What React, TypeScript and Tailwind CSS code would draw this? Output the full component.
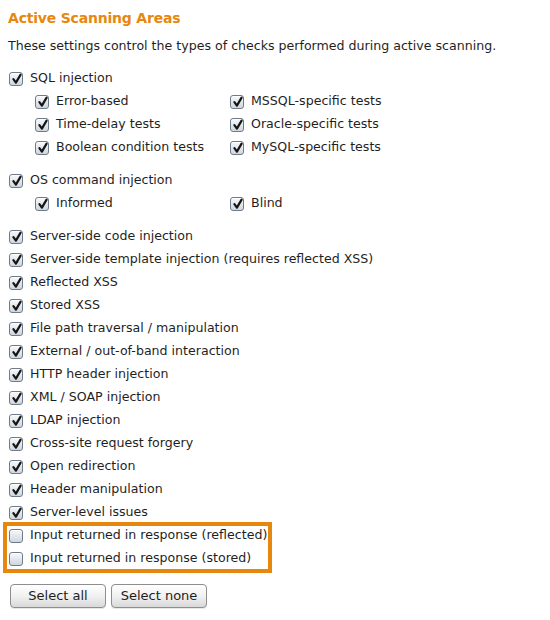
import React from "react";

type Item = { label: string; checked?: boolean };

const sqlLeft: Item[] = [
  { label: "Error-based" },
  { label: "Time-delay tests" },
  { label: "Boolean condition tests" },
];
const sqlRight: Item[] = [
  { label: "MSSQL-specific tests" },
  { label: "Oracle-specific tests" },
  { label: "MySQL-specific tests" },
];

const mainItems = [
  "Server-side code injection",
  "Server-side template injection (requires reflected XSS)",
  "Reflected XSS",
  "Stored XSS",
  "File path traversal / manipulation",
  "External / out-of-band interaction",
  "HTTP header injection",
  "XML / SOAP injection",
  "LDAP injection",
  "Cross-site request forgery",
  "Open redirection",
  "Header manipulation",
  "Server-level issues",
];

function Box({ checked = true }: { checked?: boolean }) {
  return (
    <span className="relative inline-flex h-[14px] w-[14px] shrink-0 items-center justify-center rounded-[3px] border border-[#6f7b88] bg-gradient-to-b from-[#f7f9fb] to-[#cfd6de] shadow-[inset_0_1px_0_#fff]">
      {checked && (
        <svg width="12" height="12" viewBox="0 0 12 12" className="absolute left-[1px] top-[0px]">
          <path d="M2.4 6.2 L4.9 9.6 L9.6 1.6" fill="none" stroke="#151515" strokeWidth="2.2" strokeLinecap="round" strokeLinejoin="round" />
        </svg>
      )}
    </span>
  );
}

function Row({ label, checked = true }: { label: string; checked?: boolean }) {
  return (
    <div className="flex h-[23px] items-center gap-[7px]">
      <Box checked={checked} />
      <span className="whitespace-nowrap">{label}</span>
    </div>
  );
}

function Btn({ children }: { children: React.ReactNode }) {
  return (
    <button className="h-[24px] w-[96px] rounded-[4px] border border-[#8e8e8e] bg-gradient-to-b from-[#ffffff] via-[#f1f1f1] to-[#d9d9d9] text-[13px] text-[#1e1e1e] shadow-[0_1px_0_#e8e8e8]">
      {children}
    </button>
  );
}

export default function App() {
  return (
    <div
      className="h-[620px] w-[550px] bg-white pl-[9px] pt-[8px] text-[12.6px] text-[#1f1f1f]"
      style={{ fontFamily: '"DejaVu Sans", "Liberation Sans", sans-serif' }}
    >
      <div className="-ml-[1px] h-[20px] text-[14px] font-bold leading-[20px] tracking-[-0.2px] text-[#e8870e]">
        Active Scanning Areas
      </div>
      <div className="-ml-[1px] mt-[8px] h-[20px] leading-[20px]">
        These settings control the types of checks performed during active scanning.
      </div>

      <div className="mt-[11px] flex flex-col">
        <Row label="SQL injection" />
        <div className="grid grid-cols-[195px_195px] pl-[26px]">
          <div className="flex flex-col">
            {sqlLeft.map((i) => (
              <Row key={i.label} label={i.label} />
            ))}
          </div>
          <div className="flex flex-col">
            {sqlRight.map((i) => (
              <Row key={i.label} label={i.label} />
            ))}
          </div>
        </div>

        <div className="mt-[10px]">
          <Row label="OS command injection" />
          <div className="grid grid-cols-[195px_195px] pl-[26px]">
            <Row label="Informed" />
            <Row label="Blind" />
          </div>
        </div>

        <div className="mt-[10px] flex flex-col">
          {mainItems.map((m) => (
            <Row key={m} label={m} />
          ))}
          <div className="relative">
            <div className="pointer-events-none absolute left-[-6px] top-[-2px] h-[51px] w-[269px] border-[4px] border-[#e8870e]" />
            <Row label="Input returned in response (reflected)" checked={false} />
            <Row label="Input returned in response (stored)" checked={false} />
          </div>
        </div>
      </div>

      <div className="mt-[14px] flex gap-[5px] pl-[1px]">
        <Btn>Select all</Btn>
        <Btn>Select none</Btn>
      </div>
    </div>
  );
}
